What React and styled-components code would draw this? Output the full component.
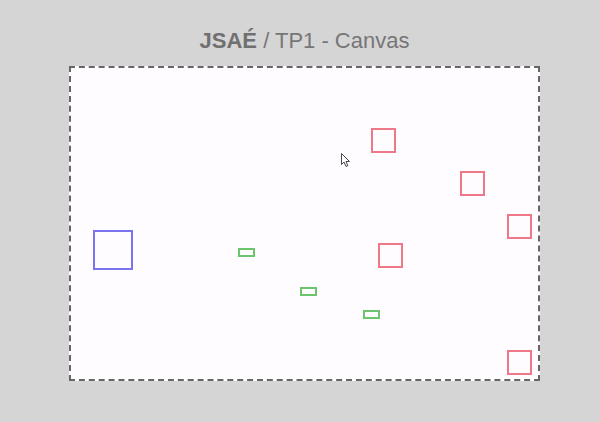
import React from 'react';
import styled, { createGlobalStyle } from 'styled-components';

const GlobalStyle = createGlobalStyle`
  html, body {
    margin: 0;
    padding: 0;
    background: #d6d5d6;
    font-family: "Liberation Sans", Arial, sans-serif;
  }
`;

const Page = styled.div`
  display: flex;
  flex-direction: column;
  align-items: center;
  padding-left: 9px;
  min-height: 422px;
  box-sizing: border-box;
`;

const Title = styled.h1`
  margin: 28px 0 12px;
  font-size: 22px;
  line-height: 26px;
  font-weight: normal;
  color: #777677;
`;

const Bold = styled.b`
  font-weight: bold;
  color: #707070;
`;

const CanvasFrame = styled.div`
  width: 467px;
  height: 311px;
  border: 2px dashed #666666;
  background: #fffcff;
`;

const Board = styled.svg`
  display: block;
`;

const squares = [
  { x: 301, y: 61 },
  { x: 390, y: 104 },
  { x: 437, y: 147 },
  { x: 308, y: 176 },
  { x: 437, y: 283 },
];

const bars = [
  { x: 168, y: 181 },
  { x: 230, y: 220 },
  { x: 293, y: 243 },
];

export default function App() {
  return (
    <>
      <GlobalStyle />
      <Page>
        <Title>
          <Bold>JSAÉ</Bold> / TP1 - Canvas
        </Title>
        <CanvasFrame>
          <Board width="467" height="311" viewBox="0 0 467 311">
            {squares.map((s, i) => (
              <rect key={i} x={s.x} y={s.y} width="23" height="23" fill="none" stroke="#ee7788" strokeWidth="2" />
            ))}
            <rect x="23" y="163" width="38" height="38" fill="none" stroke="#7a72ee" strokeWidth="2" />
            {bars.map((b, i) => (
              <rect key={i} x={b.x} y={b.y} width="15" height="7" fill="none" stroke="#6cc46c" strokeWidth="2" />
            ))}
            {/* mouse pointer */}
            <path
              d="M270.5 85.5 L270.5 96.5 L273 94 L275 98.5 L276.8 97.7 L275 93.5 L278.5 93.5 Z"
              fill="#fff"
              stroke="#333"
              strokeWidth="0.9"
              strokeLinejoin="round"
            />
          </Board>
        </CanvasFrame>
      </Page>
    </>
  );
}
